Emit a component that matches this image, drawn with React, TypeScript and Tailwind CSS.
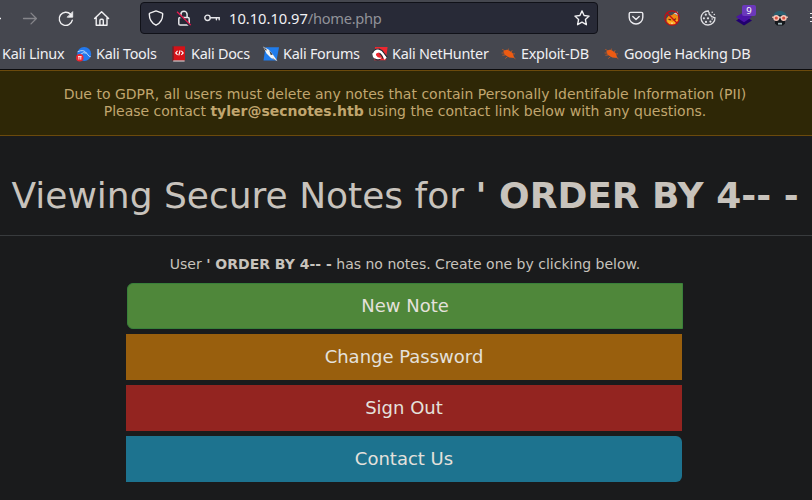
import type { ReactNode } from "react";

function BackArrow() {
  return (
    <svg className="h-5 w-1 shrink-0" viewBox="0 0 4 20" fill="none" stroke="#f0f0f2" strokeWidth="1.4">
      <path d="M-8 10.5H1" />
    </svg>
  );
}

function ForwardArrow() {
  return (
    <svg className="size-5 shrink-0" viewBox="0 0 20 20" fill="none" stroke="#85858a" strokeWidth="1.3" strokeLinecap="round" strokeLinejoin="round">
      <path d="M3.5 10.5H16.3M11 5.1L16.4 10.5L11 15.9" />
    </svg>
  );
}

function Reload() {
  return (
    <svg className="size-5 shrink-0" viewBox="0 0 20 20" fill="none" stroke="#f0f0f2" strokeWidth="1.4" strokeLinecap="round">
      <path d="M16.3 12.2A6.6 6.6 0 1 1 14.6 6.2" />
      <path d="M16.7 4V9.2H11.5Z" fill="#f0f0f2" strokeWidth=".8" strokeLinejoin="round" />
    </svg>
  );
}

function Home() {
  return (
    <svg className="size-5 shrink-0" viewBox="0 0 20 20" fill="none" stroke="#f0f0f2" strokeWidth="1.4" strokeLinecap="round" strokeLinejoin="round">
      <path d="M2.6 10.6L9.6 3.7L16.6 10.6M4.2 9.5V17.2H15V9.5M7.9 17V12.4Q7.9 11.3 9 11.3H10.2Q11.3 11.3 11.3 12.4V17" />
    </svg>
  );
}

function Shield() {
  return (
    <svg className="size-4 shrink-0" viewBox="0 0 16 16" fill="none" stroke="#f0f0f2" strokeWidth="1.4" strokeLinejoin="round">
      <path d="M8 .9L14.1 3.1Q14.7 3.3 14.7 4C14.7 9.3 12.3 13.2 8 15.2C3.7 13.2 1.3 9.3 1.3 4Q1.3 3.3 1.9 3.1Z" />
    </svg>
  );
}

function BrokenLock() {
  return (
    <svg className="size-4 shrink-0" viewBox="0 0 16 16" fill="none" stroke="#e6e6ea" strokeWidth="1.5">
      <path d="M4.9 7V4.4A3.1 3.1 0 0 1 11.1 4.4V7" />
      <rect x="2.8" y="7.4" width="10.4" height="7.6" rx="1.3" />
      <path d="M1 2.8L14.2 16" stroke="#28293a" strokeWidth="2" />
      <path d="M1 1.8L14.8 15.1" stroke="#e8194d" strokeWidth="1.3" />
    </svg>
  );
}

function Key() {
  return (
    <svg className="size-4 shrink-0" viewBox="0 0 16 16" fill="none" stroke="#e6e6ea" strokeWidth="1.4" strokeLinecap="round">
      <circle cx="3.5" cy="7.8" r="2.7" />
      <path d="M6.3 7.8H15.2V9.8M12.4 8V9.8" />
    </svg>
  );
}

function Star() {
  return (
    <svg className="size-4 shrink-0" viewBox="0 0 16 16" fill="none" stroke="#f0f0f2" strokeWidth="1.35" strokeLinejoin="round">
      <path d="M8 .9L10.1 5.5L15.1 6.1L11.4 9.5L12.4 14.7L8 12.2L3.6 14.7L4.6 9.5L.9 6.1L5.9 5.5Z" />
    </svg>
  );
}

function Pocket() {
  return (
    <svg className="size-4 shrink-0" viewBox="0 0 16 16" fill="none" stroke="#ececf0" strokeWidth="1.4" strokeLinecap="round" strokeLinejoin="round">
      <path d="M2.6 2.4H13.4Q14.8 2.4 14.8 3.8V7.2A6.8 6.8 0 0 1 1.2 7.2V3.8Q1.2 2.4 2.6 2.4Z" />
      <path d="M4.8 6.5L8 9.5L11.2 6.5" />
    </svg>
  );
}

function FoxBlocked() {
  return (
    <svg className="size-4 shrink-0" viewBox="0 0 16 16">
      <path d="M2.5 8.5L4.5 6L8 5L10 3.5L14 6L14.5 10.5L11 14.5H5.5L2.5 12Z" fill="#f28a13" />
      <path d="M3 10L6 9L8 12L12 9.5L14 10L10.5 14.7H5.2Z" fill="#ffad1f" />
      <path d="M9.8 3.6L13.4 1.6L14.6 6L12 4.6Z" fill="#cfd4d6" />
      <path d="M4.5 9.3L7 9.8M9.5 10L12 8.8" stroke="#63300e" strokeWidth="1.2" />
      <path d="M6.7 12.7H9.2L8 14Z" fill="#f5eee5" />
      <circle cx="8" cy="8" r="7.2" fill="none" stroke="#c40d14" strokeWidth="1.2" />
      <path d="M2.8 2.8L13.2 13.2" stroke="#c40d14" strokeWidth="1.3" />
    </svg>
  );
}

function Cookie() {
  return (
    <svg className="size-4 shrink-0" viewBox="0 0 16 16" fill="none" stroke="#dedee2" strokeWidth="1.3" strokeLinejoin="round">
      <path d="M8.4 1A7 7 0 1 0 15 7.6Q13.8 8 13 6.8Q11.2 7.2 10.8 5.2Q8.6 4.6 9.2 2.8Q8.2 2 8.4 1Z" />
      <g fill="#dedee2" stroke="none">
        <circle cx="5.8" cy="4.7" r="1.1" />
        <circle cx="3.9" cy="8.3" r="1.1" />
        <circle cx="8" cy="8.3" r="1.15" />
        <circle cx="6" cy="11.9" r="1.1" />
        <circle cx="10.4" cy="11.6" r="1.1" />
        <circle cx="12.2" cy="9" r=".8" />
        <circle cx="12.2" cy="2.2" r=".8" />
        <circle cx="14.3" cy="4.5" r=".8" />
      </g>
    </svg>
  );
}

function Layers() {
  return (
    <div className="relative size-4 shrink-0">
      <svg className="size-4" viewBox="0 0 16 16">
        <path d="M0 10.5L8 5.8L16 10.5L8 15.6Z" fill="#21006f" />
        <path d="M0 7L8 2L16 7L8 12.2Z" fill="#4b14a5" />
      </svg>
      <span className="absolute -top-[5px] left-[6px] flex h-[11px] w-[14px] items-center justify-center rounded-[2px] bg-[#6b39bb] text-[9.5px] leading-none text-white">9</span>
    </div>
  );
}

function Disguise() {
  return (
    <svg className="size-4 shrink-0" viewBox="0 0 16 16">
      <path d="M1.2 7.2C1.2 3.4 4 1 8 1S14.8 3.4 14.8 7.2Z" fill="#2a6070" />
      <path d="M3 6C5 4.6 11 4.6 13 6V7H3Z" fill="#16313c" />
      <path d="M2.8 9H13.2L13 13.6L11 15.4H5L3 13.6Z" fill="#15181c" />
      <path d="M6 12.8H10V14.6H6Z" fill="#9fb4b8" />
      <path d="M0 7.2H16" stroke="#eac4b6" strokeWidth="1.2" />
      <circle cx="4.3" cy="8" r="2.3" fill="#d9503e" stroke="#f6c8bb" strokeWidth="1.4" />
      <circle cx="11.7" cy="8" r="2.3" fill="#d9503e" stroke="#f6c8bb" strokeWidth="1.4" />
    </svg>
  );
}

function ToolsIcon() {
  return (
    <svg className="size-4 shrink-0" viewBox="0 0 16 16">
      <circle cx="8.2" cy="8" r="7" fill="#2379ee" />
      <path d="M1.6 5.8Q7.6 2.8 10.6 7.2T14.6 10.6M4.4 8.4Q7.4 5.6 10.6 7.2" fill="none" stroke="#c8e3ff" strokeWidth=".9" />
      <circle cx="3.8" cy="11.8" r="3.8" fill="#ed2830" />
      <path d="M2 10.6H5.6M2.9 10.6V13.6M4.8 10.6V13.6" stroke="#fff" strokeWidth=".9" />
    </svg>
  );
}

function DocsIcon() {
  return (
    <svg className="size-4 shrink-0" viewBox="0 0 16 16">
      <path d="M2.6 .3H14V14.5H2.6Z" fill="#d51218" />
      <path d="M2 .3V14.9" stroke="#8d0d13" />
      <path d="M2.2 15H13.6" stroke="#f2dfdf" strokeWidth="1" />
      <path d="M6.6 4.9L4.7 6.9L6.6 8.9M10.3 4.9L12.2 6.9L10.3 8.9M9.1 4.4L7.8 9.4" fill="none" stroke="#fff" strokeWidth="1.1" />
    </svg>
  );
}

function ForumsIcon() {
  return (
    <svg className="size-4 shrink-0" viewBox="0 0 16 16">
      <path d="M2.5 1.2H16L13.5 14.5H.5Z" fill="#207ded" />
      <path d="M0 .5L5.8 3.7L9.7 8.3L14.5 15.2L8 12L3.6 7.4Z" fill="#f3f5f6" />
      <path d="M0 .5L3.6 3.5L3.2 5.1ZM6.3 4.7L9.8 8.5L7.8 9M9 11.7L14.7 15.2L10.2 13.1Z" fill="#30343c" />
    </svg>
  );
}

function NetHunterIcon() {
  return (
    <svg className="size-4 shrink-0" viewBox="0 0 16 16">
      <path d="M3 1H15.6L13.8 14.3H2Z" fill="#ed2830" />
      <path d="M.3 8Q1.2 2.9 6.2 2.8Q10.2 3.4 11.6 6.8L14.9 11.5L12.3 13.7Q10.8 9.2 7 6.5Q3 7 4.2 9.6Q6 12.7 9.7 11.5Q7.2 15.2 3.2 13.2Q.3 11.4 .3 8Z" fill="#fff" />
      <path d="M.5 7Q2.3 2.2 7.2 3.1Q10.4 4 12 7L15.3 11.4M2.4 12.6Q5 14.8 8.3 13.2M7.6 7.2Q10 9 11 12.6" fill="none" stroke="#242932" strokeWidth="1.1" />
    </svg>
  );
}

function BugIcon() {
  return (
    <svg className="size-4 shrink-0" viewBox="0 0 16 16">
      <path d="M2.4 5.3Q5 2.6 8.2 4.4L11.6 7L13.4 12L8.3 11.6L3.6 8.8Z" fill="#ed5b12" />
      <path d="M4.5 5L1.2 3.4M3.3 7H.6M4.2 9L1.4 9.3M6.5 10.7L4.2 12.6M7 4L7.6 2.6M10.3 6L11.2 4.2M12 8L14 7.8M12 11L14.4 12.8" stroke="#c65a22" strokeWidth=".8" />
    </svg>
  );
}

function Bookmark({ icon, label, width }: { icon: ReactNode; label: string; width: string }) {
  return (
    <div className={`flex shrink-0 items-center gap-1 whitespace-nowrap ${width}`}>
      {icon}
      <span>{label}</span>
    </div>
  );
}

function Browser() {
  return (
    <header className="h-[70px] overflow-hidden border-b border-[#0b0b0d] bg-[#45474f] font-['Noto_Sans',sans-serif] text-[14.67px] text-[#f0f0f3]">
      <div className="flex h-9 items-center">
        <BackArrow />
        <div className="ml-4 flex items-center gap-4">
          <ForwardArrow />
          <Reload />
          <Home />
        </div>
        <div className="ml-7 flex h-8 w-[458px] shrink-0 items-center rounded-[4px] border border-[#101118] bg-[#282a37] pr-[7px] pl-[7px]">
          <div className="flex gap-3">
            <Shield />
            <BrokenLock />
            <Key />
          </div>
          <div className="ml-[9px] flex-1">
            10.10.10.97<span className="tracking-[-0.3px] text-[#919299]">/home.php</span>
          </div>
          <Star />
        </div>
        <div className="ml-[30px] flex items-center gap-5">
          <Pocket />
          <FoxBlocked />
          <Cookie />
          <Layers />
          <Disguise />
        </div>
        <svg className="ml-[22px] h-4 w-[2px] shrink-0" viewBox="0 0 2 16" stroke="#e8e8ec">
          <path d="M0 3.5H2M0 7.5H2M0 11.5H2" strokeWidth="1.2" />
        </svg>
      </div>
      <nav className="flex h-[36px] items-center pl-[2px] text-[14.4px] tracking-[-0.25px]">
        <span className="w-[74px] shrink-0">Kali Linux</span>
        <Bookmark icon={<ToolsIcon />} label="Kali Tools" width="w-[95px]" />
        <Bookmark icon={<DocsIcon />} label="Kali Docs" width="w-[92px]" />
        <Bookmark icon={<ForumsIcon />} label="Kali Forums" width="w-[109px]" />
        <Bookmark icon={<NetHunterIcon />} label="Kali NetHunter" width="w-[129px]" />
        <Bookmark icon={<BugIcon />} label="Exploit-DB" width="w-[103px]" />
        <Bookmark icon={<BugIcon />} label="Google Hacking DB" width="w-[160px]" />
      </nav>
    </header>
  );
}

export default function App() {
  return (
    <div className="h-[500px] w-[812px] overflow-hidden bg-[#1a1b1c] font-['DejaVu_Sans',sans-serif] text-[14px] text-[#c8c3bc]">
      <Browser />
      <main className="text-center">
        <div className="h-[66px] border-y border-[#6b4a0c] bg-[#2e2706] pt-[15px] pr-[2px] leading-[17px] text-[#c1a66f]">
          <p>Due to GDPR, all users must delete any notes that contain Personally Identifable Information (PII)</p>
          <p>
            Please contact <b>tyler@secnotes.htb</b> using the contact link below with any questions.
          </p>
        </div>
        <h1 className="flex h-[100px] items-center justify-center border-b border-[#383b3d] pt-[21px] pr-[2px] text-[36px] leading-10 whitespace-pre">
          Viewing Secure Notes for <b>' ORDER BY 4-- -</b>
        </h1>
        <p className="pt-[18px] pr-[2px] leading-5">
          User <b>' ORDER BY 4-- -</b> has no notes. Create one by clicking below.
        </p>
        <div className="mt-[9px] ml-[126px] flex w-[556px] flex-col gap-[5px] text-[18px] text-[#e4e1dc]">
          <button className="ml-px h-[46px] w-[556px] rounded-l-[6px] border border-[#39803a] bg-[#4f873a] pb-[2px]">New Note</button>
          <button className="h-[46px] bg-[#995f0d] pb-[2px]">Change Password</button>
          <button className="h-[46px] bg-[#932420] pb-[2px]">Sign Out</button>
          <button className="h-[46px] rounded-r-[6px] bg-[#1d738f] pb-[2px]">Contact Us</button>
        </div>
      </main>
    </div>
  );
}
